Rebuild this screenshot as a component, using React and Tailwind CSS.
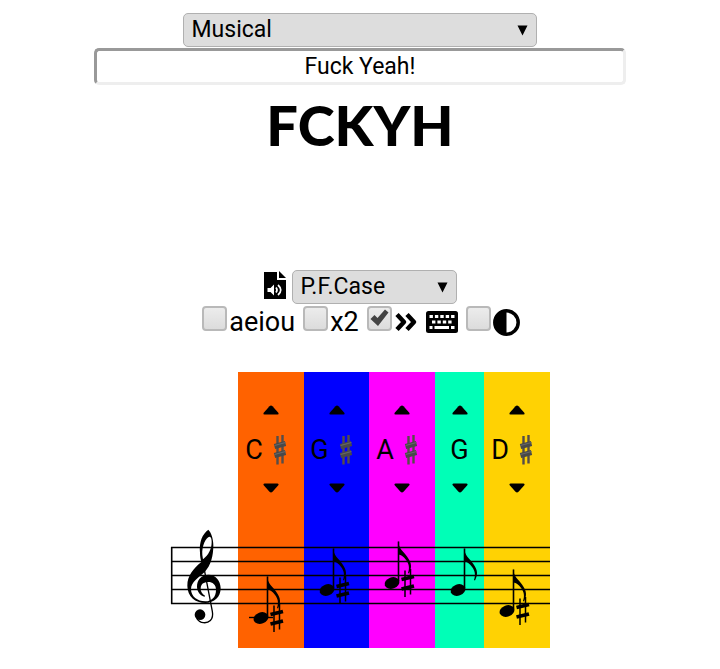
import React, { useState } from 'react';

const NOTES = [
  { letter: 'C', sharp: true, step: 0, box: 'w-[66px] bg-[#ff6200]' },
  { letter: 'G', sharp: true, step: 4, box: 'w-[65px] bg-[#0000ff]' },
  { letter: 'A', sharp: true, step: 5, box: 'w-[66px] bg-[#ff00ff]' },
  { letter: 'G', sharp: false, step: 4, box: 'w-[49px] bg-[#00ffb7]' },
  { letter: 'D', sharp: true, step: 1, box: 'w-[66px] bg-[#ffd203]' },
];

const LINES = [37.5, 51.5, 65.5, 79.5, 93.5];

const StaffLines = ({ from = 0 }) => (
  <g stroke="#000" strokeWidth="1.6">
    {LINES.map((y) => (
      <line key={y} x1={from} x2="70" y1={y} y2={y} />
    ))}
  </g>
);

const Clef = () => (
  <svg className="block h-[138px] w-[68px] shrink-0" viewBox="0 0 68 138" aria-label="Treble clef">
    <StaffLines from={1} />
    <line x1="1.7" x2="1.7" y1="37" y2="94" stroke="#000" strokeWidth="1.6" />
    <g transform="translate(-10 10) scale(0.33333)">
      <path
        fillRule="evenodd"
        d="M145 29C127 42 117 66 120 98C120 110 122 118 124 126C99 147 82 167 82 197C82 229 106 249 136 249C163 249 182 231 182 205C182 182 166 164 146 164C122 164 111 182 111 200C111 215 121 227 134 230L135 227C126 221 122 214 122 206C122 192 131 186 145 186C157 186 168 193 168 210C168 231 155 244 136 244C112 244 93 229 93 207C93 186 116 172 134 156C153 136 160 108 160 76C160 55 153 37 145 29ZM149 50C138 52 125 76 127 105L129 118C146 105 155 86 155 66C155 57 153 50 149 50Z"
      />
      <path d="M127 118C136 165 149 232 157 274C162 300 145 310 130 308C120 307 114 301 110 295" fill="none" stroke="#000" strokeWidth="4" />
      <circle cx="120" cy="284" r="16" />
    </g>
  </svg>
);

const StaffNote = ({ step, sharp, width }) => {
  const y = 107.5 - step * 7;
  return (
    <svg className="mt-1 block h-[138px] w-full" viewBox={`0 0 ${width} 138`} preserveAspectRatio="xMinYMin slice" aria-hidden="true">
      <StaffLines />
      <g transform={`translate(0 ${y})`}>
        {step === 0 && <path d="M11 0H35" stroke="#000" strokeWidth="1.4" />}
        <ellipse cx="23" cy="0.5" rx="7.6" ry="5.6" transform="rotate(-20 23 0.5)" />
        <path d="M29.5 -1V-41" stroke="#000" strokeWidth="1.6" />
        <path d="M29 -42C30 -33 34 -32 38 -26C43 -19 43 -15 40 -9L39 -9.500C41 -15 40 -20 35 -25C33 -27 31 -28 29 -28Z" />
        {sharp && (
          <g stroke="#000">
            <path d="M36 -12V14.500M41.500 -13.500V12" strokeWidth="1.500" />
            <path d="M32.500 -3L45 -6M32.500 6.500L45 3.500" strokeWidth="3.800" />
          </g>
        )}
      </g>
    </svg>
  );
};

const SharpSign = () => (
  <svg className="h-[32px] w-[14px]" viewBox="0 0 14 32" role="img" aria-label="sharp">
    <path d="M4.500 2V30.500M9.500 1V29.500" stroke="#554d49" strokeWidth="2.400" />
    <path d="M1.500 12.500L12.500 9.500M1.500 21.500L12.500 18.500" stroke="#494949" strokeWidth="5" />
    <path d="M1.500 11.500L12.500 8.500M1.500 20.500L12.500 17.500" stroke="#686868" strokeWidth="1.200" />
  </svg>
);

const NoteColumn = ({ note }) => (
  <div className={`flex flex-col pt-[18px] ${note.box}`}>
    <button type="button" aria-label="Raise note" className="flex h-10 items-center justify-center">
      <svg width="16" height="10" viewBox="0 0 16 10"><path d="M6.500 1.200Q8 0 9.500 1.200L15.500 8Q16 9.500 14.500 9.500H1.500Q0 9.500 .5 8Z" /></svg>
    </button>
    <div className={`flex h-10 items-center justify-center gap-2.5 ${note.sharp ? 'pr-2.5' : ''}`}>
      <span>{note.letter}</span>
      {note.sharp && <SharpSign />}
    </div>
    <button type="button" aria-label="Lower note" className="flex h-9 items-center justify-center">
      <svg width="16" height="10" viewBox="0 0 16 10"><path d="M6.500 8.800Q8 10 9.500 8.800L15.500 2Q16 .5 14.500 .5H1.500Q0 .5 .5 2Z" /></svg>
    </button>
    <StaffNote step={note.step} sharp={note.sharp} width={note.sharp ? 66 : 49} />
  </div>
);

const Dropdown = ({ label, options, className }) => (
  <div className={`relative ${className}`}>
    <select
      aria-label={label}
      className="block h-[34px] w-full appearance-none rounded-[5px] border border-[#b0b0b0] bg-[#ddd] pl-2 text-[23px] leading-8"
    >
      {options.map((o) => (
        <option key={o}>{o}</option>
      ))}
    </select>
    <svg className="pointer-events-none absolute top-3 right-[9px]" width="11" height="11" viewBox="0 0 11 11">
      <path d="M.5 .5H10.500L5.500 10.500Z" />
    </svg>
  </div>
);

const Toggle = ({ label, checked, onChange, children }) => (
  <label className="flex items-center gap-0.5">
    <span className="relative mb-2 block size-[25px]">
      <input
        type="checkbox"
        aria-label={label}
        checked={checked}
        onChange={onChange}
        className="block size-[25px] appearance-none rounded-[4px] border-2 border-[#b9b9b9] bg-linear-to-b from-[#ececec] to-[#dcdcdc]"
      />
      {checked && (
        <svg className="pointer-events-none absolute inset-0" width="25" height="25" viewBox="0 0 25 25">
          <path d="M3.500 13L7.500 9L10.500 12L18 3.500L21.500 6.500L11 20Z" fill="#444" />
        </svg>
      )}
    </span>
    {children}
  </label>
);

const App = () => {
  const [text, setText] = useState('Fuck Yeah!');
  const [opts, setOpts] = useState({ vowels: false, double: false, forward: true, contrast: false });
  const flip = (key) => () => setOpts({ ...opts, [key]: !opts[key] });

  return (
    <main className="flex flex-col items-center bg-white pt-[13px] pb-5 font-['Roboto',sans-serif] text-[27px] leading-8 text-black">
      <Dropdown label="Mode" options={['Musical']} className="w-[49.3%]" />
      <input
        aria-label="Phrase"
        value={text}
        onChange={(e) => setText(e.target.value)}
        className="mt-px h-[37px] w-[74%] rounded-[5px] border-3 border-t-[#999] border-r-[#eee] border-b-[#eee] border-l-[#999] text-center text-[23px] leading-8"
      />
      <h1 className="h-[185px] pt-1 font-['Lato',sans-serif] text-[56px] leading-[72px] font-black">FCKYH</h1>

      <div className="flex items-center gap-1.5">
        <svg className="mb-1" width="22" height="29" viewBox="0 0 22 29" role="img" aria-label="Audio file">
          <path d="M0 1H13V9H22V28H0Z" />
          <path d="M15 0L22 7H15Z" />
          <path d="M3.500 17H6.500L10 13.500V24.500L6.500 21H3.500Z" fill="#fff" />
          <path d="M12 16.500Q14 19 12 21.500M14 14Q19.500 19 14 24" fill="none" stroke="#fff" strokeWidth="1.700" />
        </svg>
        <Dropdown label="Case" options={['P.F.Case']} className="w-[165px]" />
      </div>

      <div className="flex h-9 flex-wrap items-center gap-2 pl-0.5">
        <Toggle label="aeiou" checked={opts.vowels} onChange={flip('vowels')}>aeiou</Toggle>
        <Toggle label="x2" checked={opts.double} onChange={flip('double')}>x2</Toggle>
        <Toggle label="Forward" checked={opts.forward} onChange={flip('forward')}>
          <svg width="24" height="20" viewBox="0 0 24 20">
            <path d="M3 2.500L10 10L3 17.500M13 2.500L20 10L13 17.500" fill="none" stroke="#000" strokeWidth="4.500" strokeLinejoin="round" />
          </svg>
        </Toggle>
        <button type="button" aria-label="Keyboard">
          <svg width="32" height="22" viewBox="0 0 32 22">
            <rect width="32" height="22" rx="2.500" />
            <g stroke="#fff" strokeWidth="3.200">
              <path d="M3.500 5.500H28.500" strokeDasharray="3.400 2" />
              <path d="M6 11H27" strokeDasharray="3.400 2" />
              <path d="M3.500 16.500H6.500M8.500 16.500H23M25 16.500H28.500" />
            </g>
          </svg>
        </button>
        <Toggle label="Contrast" checked={opts.contrast} onChange={flip('contrast')}>
          <svg width="27" height="27" viewBox="0 0 27 27">
            <circle cx="13.500" cy="13.500" r="11.700" fill="none" stroke="#000" strokeWidth="3.500" />
            <path d="M13.500 1A12.500 12.500 0 0 0 13.500 26Z" />
          </svg>
        </Toggle>
      </div>

      <section className="mt-8 flex items-end" aria-label="Melody">
        <Clef />
        {NOTES.map((note, i) => (
          <NoteColumn key={i} note={note} />
        ))}
      </section>
    </main>
  );
};

export default App;
